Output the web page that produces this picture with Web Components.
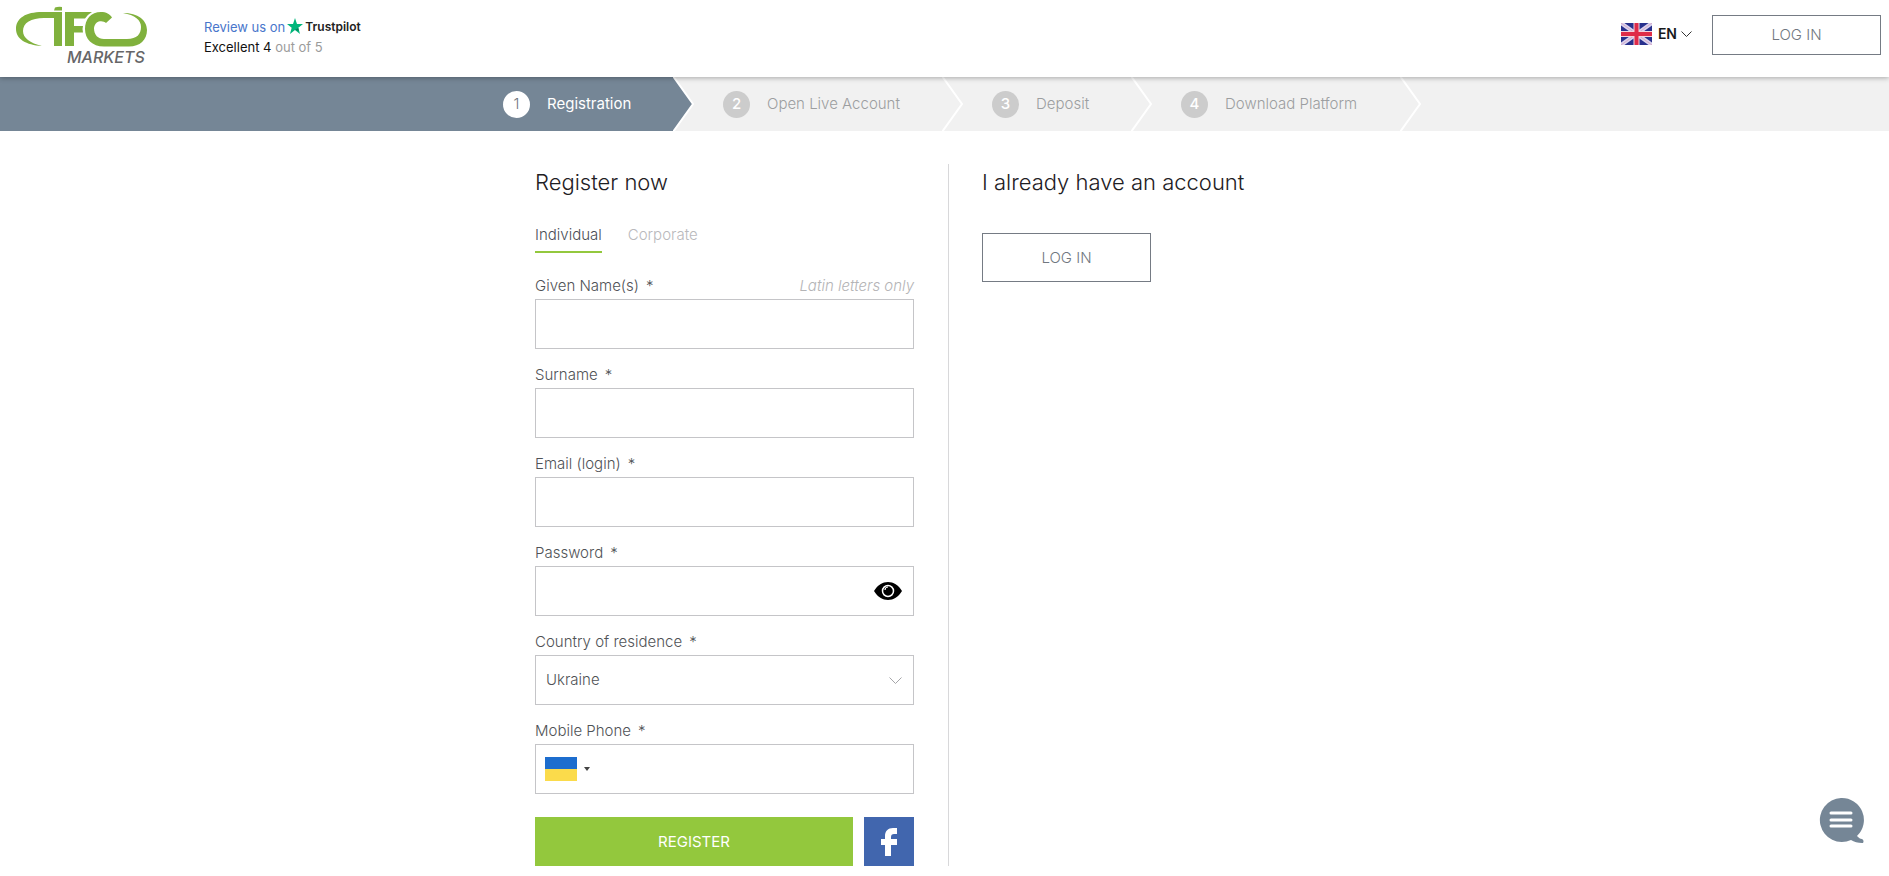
<!DOCTYPE html>
<html lang="en">
<head>
<meta charset="utf-8">
<meta name="viewport" content="width=device-width, initial-scale=1">
<title>Registration - IFC Markets</title>
<style>
  body { margin: 0; background: #fff; color: #4f5256; font: 300 15px/24px Inter, "Liberation Sans", sans-serif; }
  register-page { --slate: #758696; --line: #c5c5c8; --green: #93c83d; }
</style>
</head>
<body>
<register-page></register-page>
<script>
const define = (name, html, setup) => customElements.define(name, class extends HTMLElement {
  constructor() {
    super();
    this.attachShadow({ mode: 'open' }).innerHTML = '<style>*{box-sizing:border-box}button,input,select{font:inherit;color:inherit;margin:0}</style>' + html;
  }
  connectedCallback() { if (setup) setup(this, this.shadowRoot); }
});

define('brand-logo', `
<style>:host{display:block}a,svg{display:block}</style>
<a href="#" aria-label="IFC Markets">
<svg width="138" height="68" viewBox="14 0 138 68">
  <g fill="#80b13d">
    <path d="M55 7.500Q58 6.500 62 7V10.500H54Z"/>
    <path d="M62 12V46H54V18H44C31 18 23 23 23 31C23 38 30 43 42 46C26 45 16 39 16 29C16 18 26 12 42 12Z"/>
    <path d="M65 12H92Q87 15 85 18.500H74V26H83Q82 29 83 32.500H74V46H65Z"/>
    <path d="M112 17.500L106 23C103 20 95 20 94 28C94 35 98 39 104 39H127C137 39 141 34 141 27C141 20 135 15 123 13C138 13 147 20 147 30C147 40 140 46.500 129 46.500H104C92 46.500 85 39 85 29C85 19 91 12 101 12C106 12 110 14 112 17.500Z"/>
  </g>
  <text x="67" y="63" font-family="Inter, sans-serif" font-size="16" font-style="italic" font-weight="500" fill="#666668">MARKETS</text>
</svg></a>`);

define('trust-rating', `
<style>
:host{display:block;font-size:13px;line-height:20px;font-weight:400;color:#9b9b9b}
.top{display:flex;align-items:center;color:#4976cb;text-decoration:none;gap:2px}
b{font-size:12px;font-weight:600;color:#222}strong{font-weight:400;color:#111}
svg{margin-top:-2px}
</style>
<a class="top" href="#">Review us on
<svg width="16" height="16" viewBox="0 0 24 24"><path fill="#00b67a" d="M12 0l3 9h9l-7 5.500 2.500 9.500L12 18l-7.500 6L7 14.500 0 9h9z"/><path fill="#087d57" d="M17 15l-5 3 5.500 1z"/></svg>
<b>Trustpilot</b></a>
<div><strong>Excellent 4</strong> out of 5</div>`);

define('outline-button', `
<style>
:host{display:block;width:169px;height:49px}
button{width:100%;height:100%;padding:0;border:1px solid #757b84;background:#fff;color:#717780;cursor:pointer}
</style>
<button type="button"><slot></slot></button>`);

define('language-menu', `
<style>
:host{display:block}
button{display:flex;align-items:center;gap:6px;padding:0;border:0;background:none;color:#17191c;font-weight:600;font-size:14px}
.chev{margin-left:-2px}
</style>
<button type="button" aria-haspopup="listbox">
<svg width="31" height="22" viewBox="0 0 31 22"><path fill="#28308d" d="M0 0h31v22H0z"/><path d="M0 0L31 22M31 0L0 22" stroke="#d9d3ee" stroke-width="4"/><path d="M0 0L31 22M31 0L0 22" stroke="#d7a9c8" stroke-width="1"/><path d="M15.500 0v22M0 11h31" stroke="#f3d3de" stroke-width="6"/><path d="M15.500 0v22M0 11h31" stroke="#df2b49" stroke-width="4"/></svg>
EN
<svg class="chev" width="11" height="8" viewBox="0 0 11 8" fill="none" stroke="#333"><path d="M.5 1.500l5 5 5-5"/></svg>
</button>`);

define('site-header', `
<style>
:host{display:block;position:relative;z-index:1;background:#fff;box-shadow:0 1px 5px rgba(0,0,0,.3)}
header{display:flex;align-items:flex-start;height:77px;padding:0 8px 0 14px}
trust-rating{margin:17px auto 0 52px}
language-menu{margin:22px 20px 0 0}
outline-button{height:40px;margin-top:15px}
</style>
<header><brand-logo></brand-logo><trust-rating></trust-rating><language-menu></language-menu><outline-button>LOG IN</outline-button></header>`);

define('progress-step', `
<style>
:host{display:flex;align-items:center;gap:17px;height:54px;padding-left:29px;position:relative;color:#9c9ea0;white-space:nowrap}
:host([active]){background:linear-gradient(var(--slate),var(--slate)) 0 0/calc(100% - 20px) 100% no-repeat;color:#fff;padding-left:35px;font-weight:400}
i{display:grid;place-items:center;width:27px;height:27px;border-radius:50%;background:#ccc;color:#fff;font-style:normal;font-weight:500;flex:none}
:host([active]) i{background:#fff;color:#70777e;font-weight:300}
svg{position:absolute;right:-1px;top:0;fill:none;stroke:#fff;stroke-width:2}
:host([active]) svg{fill:var(--slate)}
</style>
<i></i><span><slot></slot></span>
<svg width="22" height="54" viewBox="0 0 22 54"><path d="M0 -1L20 27 0 55"/></svg>`,
(el, root) => { root.querySelector('i').textContent = el.getAttribute('number'); });

define('progress-bar', `
<style>
:host{display:grid;grid-template-columns:1fr 226px 269px 189px 269px 1fr;background:#f1f1f1}
.lead{background:var(--slate)}
</style>
<div class="lead"></div>
<progress-step number="1" active>Registration</progress-step>
<progress-step number="2">Open Live Account</progress-step>
<progress-step number="3">Deposit</progress-step>
<progress-step number="4">Download Platform</progress-step>`);

const fieldStyle = `
:host{display:block;margin-bottom:13px}
.top{display:flex;justify-content:space-between;height:26px;line-height:26px}
label span{margin-left:7px}
em{color:#b4b4b6}
.box{display:flex;align-items:center;height:50px;border:1px solid var(--line);background:#fff}
input,select{flex:1;min-width:0;height:100%;padding:0 10px;border:0;background:none;outline:0;appearance:none}
.box>svg{margin-right:11px}
button{display:flex;align-items:center;padding:0;border:0;background:none}
.eye{margin-right:11px}
.flag{gap:7px;margin-left:9px}`;

const lead = {
  tel: `<button class="flag" type="button" aria-label="Country code: Ukraine"><svg width="32" height="24" viewBox="0 0 32 24"><path fill="#1d6dce" d="M0 0h32v12H0z"/><path fill="#fbdb4b" d="M0 12h32v12H0z"/></svg><svg width="6" height="4" viewBox="0 0 6 4"><path fill="#444" d="M0 0h6L3 4z"/></svg></button>`
};
const trail = {
  password: `<button class="eye" type="button" aria-label="Show password"><svg width="28" height="18" viewBox="0 0 28 18"><path d="M0 9C7-3 21-3 28 9 21 21 7 21 0 9Z"/><circle cx="14" cy="9" r="5.500" fill="none" stroke="#fff" stroke-width="1.500"/><path d="M11 8a3 3 0 0 1 3-3" fill="none" stroke="#fff" stroke-width="1.200"/></svg></button>`
};

define('form-field', `<style>${fieldStyle}</style>
<div class="top"><label for="control"><slot></slot><span>*</span></label></div>
<div class="box"></div>`,
(el, root) => {
  const type = el.getAttribute('type') || 'text';
  if (el.hasAttribute('hint')) {
    const hint = document.createElement('em');
    hint.textContent = el.getAttribute('hint');
    root.querySelector('.top').append(hint);
  }
  root.querySelector('.box').innerHTML = (lead[type] || '') + `<input id="control" type="${type}" required>` + (trail[type] || '');
});

define('country-field', `<style>${fieldStyle}
.box{position:relative}.box>svg{position:absolute;right:0;pointer-events:none}</style>
<div class="top"><label for="control"><slot></slot><span>*</span></label></div>
<div class="box"><select id="control"><option>Ukraine</option></select>
<svg width="13" height="9" viewBox="0 0 13 9" fill="none" stroke="#a5a5a8"><path d="M.5 1.500l6 6 6-6"/></svg></div>`);

define('account-tabs', `
<style>
:host{display:flex;gap:26px}
button{padding:0 0 4px;border:0;border-bottom:2px solid transparent;background:none;color:#b9b9bc}
button[aria-selected=true]{color:#4a4d55;border-color:var(--green)}
</style>
<button role="tab" aria-selected="true">Individual</button><button role="tab" aria-selected="false">Corporate</button>`);

define('form-actions', `
<style>
:host{display:flex;gap:11px;height:49px;margin-top:23px}
button{border:0;padding:0}
.go{flex:1;background:var(--green);color:#fff;font-weight:400}
.fb{width:50px;background:#4166ae}
svg{display:block;margin:auto}
</style>
<button class="go" type="submit">REGISTER</button>
<button class="fb" type="button" aria-label="Register with Facebook"><svg width="16" height="28" viewBox="0 0 16 28"><path fill="#fff" d="M4 28V17H0v-6h4V8c0-5 3-8 8-8h4v6h-3c-2 0-3 1-3 3v2H16v6h-6v11z"/></svg></button>`);

define('chat-button', `
<style>
:host{position:fixed;right:24px;bottom:32px}
button{display:block;padding:0;border:0;background:none}svg{display:block}
</style>
<button type="button" aria-label="Open chat"><svg width="47" height="47" viewBox="0 0 47 47"><path fill="var(--slate)" d="M23 1a22 22 0 1 0 10 42c3 2 7 3 11 3 2 0 2-3 0-4-2 0-3-1-5-3A22 22 0 0 0 23 1Z"/><path d="M13 16h20M13 23h20M13 29h20" stroke="#fff" stroke-width="3" stroke-linecap="round"/></svg></button>`);

define('register-page', `
<style>
:host{display:block}
main{display:grid;grid-template-columns:414px 413px;justify-content:center;margin:33px 0 0;padding-bottom:10px;padding-left:8px}
.left{padding-right:34px;border-right:1px solid #d8d8da}
.right{padding-left:33px}
h1,h2{margin:0;padding-top:2px;font-size:22px;line-height:32px;font-weight:300;color:#1e2024}
account-tabs{margin:25px 0 20px}
.right outline-button{margin-top:35px}
</style>
<site-header></site-header>
<progress-bar></progress-bar>
<main>
<section class="left">
<h1>Register now</h1>
<account-tabs role="tablist"></account-tabs>
<form>
<form-field hint="Latin letters only">Given Name(s)</form-field>
<form-field>Surname</form-field>
<form-field type="email">Email (login)</form-field>
<form-field type="password">Password</form-field>
<country-field>Country of residence</country-field>
<form-field type="tel">Mobile Phone</form-field>
<form-actions></form-actions>
</form>
</section>
<section class="right">
<h2>I already have an account</h2>
<outline-button>LOG IN</outline-button>
</section>
</main>
<chat-button></chat-button>`);
</script>
</body>
</html>
